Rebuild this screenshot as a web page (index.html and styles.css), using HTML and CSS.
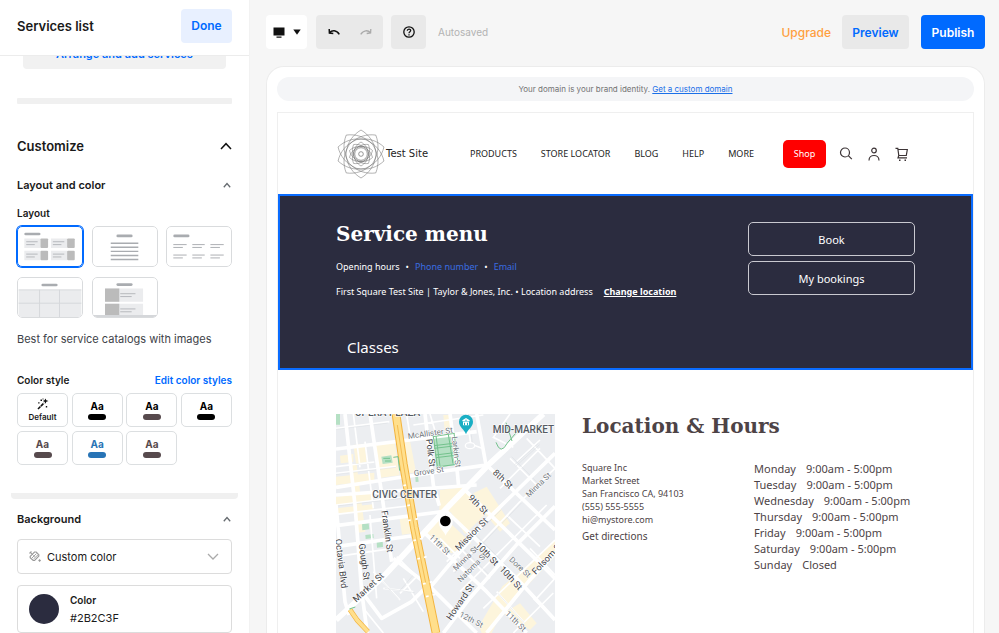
FILE: index.html
```html
<!DOCTYPE html>
<html lang="en">
<head>
<meta charset="utf-8">
<meta name="viewport" content="width=device-width, initial-scale=1">
<title>Services list</title>
<link rel="stylesheet" href="styles.css">
</head>
<body>
<div class="app">
  <aside class="sidebar">
    <header class="side-head">
      <h1>Services list</h1>
      <button class="btn btn-done" type="button">Done</button>
    </header>
    <div class="side-scroll">
      <div class="side-body">
        <button class="arrange" type="button">Arrange and add services</button>
        <div class="divider"></div>
        <div class="row customize">
          <h2>Customize</h2>
          <svg class="chev-lg" viewBox="0 0 12 8"><path d="M1 7 6 1.7 11 7" fill="none" stroke="#111" stroke-width="1.5"/></svg>
        </div>
        <div class="row">
          <h3>Layout and color</h3>
          <svg class="chev-sm" viewBox="0 0 8 6"><path d="M.8 5.2 4 1.6l3.200 3.600" fill="none" stroke="#666b70" stroke-width="1.300"/></svg>
        </div>
        <h4 class="label-layout">Layout</h4>
        <div class="layouts">
          <button class="layout is-selected" type="button" aria-label="Cards"><svg viewBox="0 0 66 41">
            <rect x="6" y="6" width="17" height="2.800" rx="1.400" fill="#a9acb0"/>
            <g fill="#ebecee"><path d="M6 12h17v10H6zM34 12h17v10H34zM6 25h17v10H6zM34 25h17v10H34z"/></g>
            <g fill="#bbb"><rect x="23" y="12" width="8" height="10" rx="1"/><rect x="51" y="12" width="8" height="10" rx="1"/><rect x="23" y="25" width="8" height="10" rx="1"/><rect x="51" y="25" width="8" height="10" rx="1"/></g>
            <path d="M8 15.500h12M8 18.500h9M36 15.500h12M36 18.500h9M8 28.500h12M8 31.500h9M36 28.500h12M36 31.500h9" stroke="#b4b6ba"/></svg></button>
          <button class="layout" type="button" aria-label="List"><svg viewBox="0 0 66 41">
            <rect x="24" y="8" width="17" height="2.800" rx="1.400" fill="#a9acb0"/>
            <path d="M18 17h29M18 21.300h29M18 25.600h29M18 29.900h29M18 34.200h29" stroke="#a9acb0" stroke-width="1.500"/></svg></button>
          <button class="layout" type="button" aria-label="Columns"><svg viewBox="0 0 66 41">
            <rect x="6" y="8" width="17" height="2.800" rx="1.400" fill="#a9acb0"/>
            <path d="M6 18.500h14M6 21.500h10M26 18.500h13M26 21.500h10M45 18.500h14M45 21.500h10M6 29.500h14M6 32.500h10M26 29.500h13M26 32.500h10M45 29.500h14M45 32.500h10" stroke="#a9acb0"/></svg></button>
          <button class="layout" type="button" aria-label="Grid"><svg viewBox="0 0 66 41">
            <path d="M0 12.500h66V41H0z" fill="#ebecee"/>
            <rect x="24" y="6" width="17" height="2.800" rx="1.400" fill="#a9acb0"/>
            <path d="M0 12.500h66M0 26.500h66M22 12.500V41M43 12.500V41" stroke="#d5d7da"/></svg></button>
          <button class="layout" type="button" aria-label="Stacked"><svg viewBox="0 0 66 41">
            <rect x="24" y="5.500" width="17" height="2.800" rx="1.400" fill="#a9acb0"/>
            <path d="M12 11h40v14H12zM12 27h40v12H12z" fill="#ebecee"/>
            <path d="M12 11h15v14H12zM12 27h15v12H12z" fill="#bbb"/>
            <path d="M28 16.500h16M28 19.500h12M28 32.500h16M28 35.500h12" stroke="#b4b6ba"/>
            <path d="M0 40h66" stroke="#d5d7da" stroke-width="2"/></svg></button>
        </div>
        <p class="hint">Best for service catalogs with images</p>
        <div class="row row-style">
          <h4>Color style</h4>
          <a class="edit" href="#">Edit color styles</a>
        </div>
        <div class="styles">
          <button class="style style-default" type="button"><svg viewBox="0 0 12 12"><path d="M1 11 7 5" stroke="#111" stroke-width="1.600" stroke-dasharray="3.500 .6"/><path d="M8.500.5 9.300 2.200 11.500 3 9.300 3.800 8.500 5.800 7.500 3.800 5.800 3l1.700-.8z" fill="#111"/><path d="M3.500 1.500h1.500v1.500H3.500zM1.200 4.200h1.300v1.300H1.200zM5.500.4h1v1h-1zM8.800 8h1.400v1.400H8.800z" fill="#111"/></svg><span>Default</span></button>
          <button class="style tone-black" type="button">Aa<i></i></button>
          <button class="style tone-mixed" type="button">Aa<i></i></button>
          <button class="style tone-black" type="button">Aa<i></i></button>
          <button class="style tone-brown" type="button">Aa<i></i></button>
          <button class="style tone-blue" type="button">Aa<i></i></button>
          <button class="style tone-brown" type="button">Aa<i></i></button>
        </div>
        <div class="divider divider-wide"></div>
        <div class="row row-bg">
          <h3><label for="bg">Background</label></h3>
          <svg class="chev-sm" viewBox="0 0 8 6"><path d="M.8 5.200 4 1.600l3.200 3.600" fill="none" stroke="#666b70" stroke-width="1.300"/></svg>
        </div>
        <div class="select-box">
          <svg class="bucket" viewBox="0 0 12 12" fill="none" stroke="#9a9a9a"><path d="M1.200 5.300 5.500 1h1.700l2.600 2.700v1.400L5.600 9.500H4.200L1.200 6.700z" stroke-width="1.200"/><path d="m3 7 4.500-4.500M4.500 8 9 3.800M1 1l3.500 3.500M1 3V1h2M6 5l-2 .3" stroke-width=".9"/><circle cx="10.600" cy="9.500" r=".8" fill="#9a9a9a"/></svg>
          <select id="bg"><option>Custom color</option></select>
          <svg class="arrow" viewBox="0 0 12 7"><path d="M1 1l5 5 5-5" fill="none" stroke="#aaa" stroke-width="1.300"/></svg>
        </div>
        <button class="color-card" type="button">
          <span class="swatch"></span>
          <span class="color-text"><b>Color</b><span>#2B2C3F</span></span>
        </button>
      </div>
    </div>
  </aside>

  <main class="main">
    <div class="toolbar">
      <button class="tool tool-device" type="button" aria-label="Device">
        <svg class="i-screen" viewBox="0 0 12 11"><path d="M.5.500h11v8H.5zM3.500 9.600h5v1.200h-5z" fill="#111"/></svg>
        <svg class="i-tri" viewBox="0 0 8 6"><path d="M.3.500h7.400L4 5.700z" fill="#111"/></svg>
      </button>
      <div class="tool tool-history">
        <button type="button" aria-label="Undo"><svg viewBox="0 0 12 8"><path d="M1.500 4.600C4 2 8.500 1.800 11.300 6.400M1.200 1l.2 4 3.900.5" fill="none" stroke="#111" stroke-width="1.500"/></svg></button>
        <button type="button" aria-label="Redo"><svg viewBox="0 0 12 8"><path d="M10.500 4.600C8 2 3.500 1.800.7 6.400M10.800 1l-.2 4-3.900.5" fill="none" stroke="#aaa" stroke-width="1.300"/></svg></button>
      </div>
      <button class="tool tool-help" type="button" aria-label="Help"><svg viewBox="0 0 12 12"><circle cx="6" cy="6" r="5.200" fill="none" stroke="#111" stroke-width="1.300"/><path d="M4.300 4.800C4.300 2.500 7.700 2.500 7.700 4.600 7.700 5.800 6 5.800 6 7.300M6 8.200v1.300" fill="none" stroke="#111" stroke-width="1.300"/></svg></button>
      <span class="saved">Autosaved</span>
      <a class="upgrade" href="#">Upgrade</a>
      <button class="btn btn-preview" type="button">Preview</button>
      <button class="btn btn-publish" type="button">Publish</button>
    </div>

    <div class="canvas">
      <div class="banner">Your domain is your brand identity.&nbsp;<a href="#">Get a custom domain</a></div>
      <div class="site">
        <header class="site-head">
          <svg class="lotus" viewBox="-75 -75 150 150" fill="none" stroke="#666" stroke-width="2">
            <defs>
              <path id="petal" d="M0-72C24-58 42-34 45 0 42 34 24 58 0 72-24 58-42 34-45 0-42-34-24-58 0-72z" vector-effect="non-scaling-stroke"/>
              <g id="ring"><use href="#petal"/><use href="#petal" transform="rotate(38)"/><use href="#petal" transform="rotate(73)"/><use href="#petal" transform="rotate(107)"/><use href="#petal" transform="rotate(142)"/></g>
            </defs>
            <g stroke-width=".5"><use href="#ring"/><use href="#ring" transform="scale(.5)"/></g>
            <circle r="19"/><circle r="7"/>
          </svg>
          <span class="site-name">Test Site</span>
          <nav class="nav">
            <a href="#">PRODUCTS</a><a href="#">STORE LOCATOR</a><a href="#">BLOG</a><a href="#">HELP</a><a href="#">MORE</a>
          </nav>
          <button class="shop" type="button">Shop</button>
          <div class="icons">
            <button type="button" aria-label="Search"><svg viewBox="0 0 14 14"><circle cx="6" cy="5.500" r="4.500"/><path d="m9.300 8.700 3.500 3.500"/></svg></button>
            <button type="button" aria-label="Account"><svg viewBox="0 0 14 14"><circle cx="7" cy="3.500" r="2.300"/><path d="M2 13.500C2 6.800 12 6.800 12 13.500"/></svg></button>
            <button type="button" aria-label="Cart"><svg viewBox="0 0 14 14"><path d="M.5 1.300h2.300l1 7.200h7.500l1-6H3M3.800 8.500 3 10.800h9"/><path d="M4 13.200h1.500M9.500 13.200H11" stroke-width="1.600"/></svg></button>
          </div>
        </header>

        <section class="hero">
          <div class="hero-top">
            <div class="hero-info">
              <h2>Service menu</h2>
              <p class="contact"><span>Opening hours</span><span>•</span><a href="#">Phone number</a><span>•</span><a href="#">Email</a></p>
              <p class="place"><span>First Square Test Site | Taylor &amp; Jones, Inc. • Location address</span><a href="#">Change location</a></p>
            </div>
            <div class="hero-actions">
              <button type="button">Book</button>
              <button type="button">My bookings</button>
            </div>
          </div>
          <h3>Classes</h3>
        </section>

        <section class="location">
          <svg class="map" viewBox="18 27 657 657" role="img" aria-label="Map">
            <rect x="18" y="27" width="657" height="657" fill="#eceef1"/>
            <g fill="#fdf5dc">
              <path d="M18 215l115-12v24L18 240zM18 275l110-12v24L18 300zM18 310l112-12v16L18 328zM70 120l35-4 5 55-32 5zM30 152l40-5v24l-38 4zM136 116l58-5 15 100-62 8zM210 110l30-3 18 95-26 4zM330 255l70-8 18 22-60 55-30-8zM280 375l52-48 92 88-60 30zM355 310l58-52 62 60-70 70zM430 265l40-20 70 110-30 25-50-60zM455 684l-8-20 70-120 60-50 55-50 43-40v50l-160 170-30 60zM520 625l50-30 50 60-20 20zM340 30h20l4 42-20 2zM208 335l30-3 14 52-36 5zM80 180l26 200-22 3-18-205z"/>
            </g>
            <g fill="#b5e0c4"><path d="M18 27h12v32H18zM96 358l20-3 2 18-21 3zM106 390l24-3 1 12-24 3zM140 410l18-2 1 18-18 2zM308 92l66-8 6 95-60 10zM154 155l30-4 4 22-30 4zM256 216l8-2 2 16-9 1z"/></g>
            <g fill="none" stroke="#fff" stroke-width="5">
              <path d="M18 70l160-20M18 185l115-14M70 27l20 160M105 110l25 200M18 205l180-21M18 300l212-25M18 328l215-25M18 455l150-22M120 330l20 250M230 30l10 60M410 27l12 90 40 15M300 27l18 60M250 60l210-30M540 27l-50 70 60 30M560 170l70-65M540 160l90 90M590 100l85 90M510 250l120-120M560 300l115-110M530 330l100 95M390 430l90 90M420 380l110 115M330 400l60 60M350 470l160-160M370 500l200-210M390 560l260-260M460 610l215-205M500 560l80 90M600 430l75 80M560 520l110 120M200 455l60 60-50 50M130 500l80 85M100 610l60 74M220 520l60 100M250 560l-90-10M620 580l55-60M550 684l120-120M610 580l60 60"/>
            </g>
            <g fill="none" stroke="#d9dce1" stroke-width="1.500">
              <path d="M553 180l72-65M557 184l72-65M200 460l50 50-40 46M137 508l70 76M395 426l88 89M425 376l110 112M354 474l160-160M374 504l200-210M18 73l155-19M18 208l180-21M18 303l212-25M415 27l12 86M504 565l78 88M545 155l90 91M164 550l90 13"/>
            </g>
            <g fill="none" stroke="#fff" stroke-width="11" stroke-linejoin="round">
              <path d="M45 27l30 273 20 260 17 124M18 300l27 290 12 40M120 27l33 225 32 218M285 27l25 213 18 62M360 27l20 153 6 66M440 27l28 153M18 132l422-52M18 247l180-28 280-40M18 270l422-30M18 362l332-44M18 425l225-32"/>
              <path d="M470 180l205 195M400 250l240 235 35 35M345 315l215 205 115 125M285 385l185 175 120 124M190 460l110 85 140 139M290 560l180-215L675 145M340 684l80-105 140-160 115-115M470 684l130-160 75-80M95 560l60 80 90-50 40-40"/>
            </g>
            <path d="M18 645l142-130 185-200 135-140L640 27" fill="none" stroke="#fff" stroke-width="17"/>
            <ellipse cx="420" cy="122" rx="14" ry="9" fill="#eceef1" stroke="#fff" stroke-width="4"/>
            <path d="M198 27l22 150 33 190 65 317" fill="none" stroke="#f3b43f" stroke-width="26"/>
            <path d="M198 27l22 150 33 190 65 317" fill="none" stroke="#ffdf8c" stroke-width="20"/>
            <path d="M202 60l18 117 33 190 34 166" fill="none" stroke="#f5bd52" stroke-width="3"/>
            <path d="M60 614l22 32 32 34" fill="none" stroke="#f3b43f" stroke-width="15"/>
            <path d="M60 614l22 32 32 34" fill="none" stroke="#ffdf8c" stroke-width="11"/>
            <path d="M242 345l-8 2M264 341l-8 2M258 405l-8 2M278 400l-8 2M270 460l-8 2M290 455l-8 2M287 535l-8 2M307 530l-8 2M296 573l-8 2M316 568l-8 2M240 300l-8 2M228 240l-8 2" stroke="#fff" stroke-width="5"/>
            <g fill="none" stroke="#73c28c" stroke-width="3"><path d="M308 95l65-10M312 122l66-8M313 130l66-8M316 150l66-8M318 158l66-8M320 186l60-8M318 92l12 92M355 88l14 88M310 95l12 90M372 84l12 92M190 157l14-2 5 42M498 112q14 40 34 2l30-35M528 53l18 55M160 160h20M165 168h18M58 612l18-6"/></g>
            <path d="M408 88c-5-16-21-21-21-38a21 21 0 0 1 42 0c0 17-16 22-21 38z" fill="#19afc4"/>
            <path d="M397 46l11-7 11 7v3h-22zM399 50h18v11h-18z" fill="#fff"/><path d="M402 53h3v8h-3zM411 53h3v8h-3zM406 44h4v3h-4z" fill="#19afc4"/>
            <path d="M347 392c-4-14-21-21-21-43a21 21 0 0 1 42 0c0 22-17 29-21 43z" fill="#fff"/>
            <circle cx="346" cy="348" r="16"/>
            <g class="map-area"><text x="74" y="34">OPERA PLAZA</text><text x="127" y="280">CIVIC CENTER</text><text x="488" y="85">MID-MARKET</text></g>
            <g class="map-road">
              <text transform="translate(288 103) rotate(83)">Polk St</text>
              <text transform="translate(154 318) rotate(82)">Franklin St</text>
              <text transform="translate(86 417) rotate(82)">Gough St</text>
              <text transform="translate(16 403) rotate(83)">Octavia Blvd</text>
              <text transform="translate(79 593) rotate(-43)">Market St</text>
              <text transform="translate(487 205) rotate(43)">8th St</text>
              <text transform="translate(413 280) rotate(45)">9th St</text>
              <text transform="translate(386 439) rotate(-45)">Mission St</text>
              <text transform="translate(435 422) rotate(46)">10th St</text>
              <text transform="translate(507 494) rotate(47)">10th St</text>
              <text transform="translate(617 510) rotate(-47)">Folsom St</text>
              <text transform="translate(363 647) rotate(-56)">Howard St</text>
            </g>
            <g class="map-minor">
              <text transform="translate(235 102) rotate(-8)">McAllister St</text>
              <text transform="translate(365 95) rotate(83)">Larkin St</text>
              <text transform="translate(253 213) rotate(-8)">Grove St</text>
              <text transform="translate(597 278) rotate(-44)">Minna St</text>
              <text transform="translate(296 398) rotate(44)">11th St</text>
              <text transform="translate(379 499) rotate(-45)">Minna St</text>
              <text transform="translate(392 533) rotate(-45)">Natoma St</text>
              <text transform="translate(536 466) rotate(43)">Dore St</text>
              <text transform="translate(386 634) rotate(27)">12th St</text>
              <text transform="translate(524 628) rotate(44)">11th St</text>
            </g>
          </svg>
          <div class="details">
            <h2>Location &amp; Hours</h2>
            <div class="columns">
              <address>
                <span>Square Inc</span><span>Market Street</span><span>San Francisco CA, 94103</span><span>(555) 555-5555</span><span>hi@mystore.com</span>
                <a href="#">Get directions</a>
              </address>
              <ul class="hours">
                <li><span>Monday</span><span>9:00am - 5:00pm</span></li>
                <li><span>Tuesday</span><span>9:00am - 5:00pm</span></li>
                <li><span>Wednesday</span><span>9:00am - 5:00pm</span></li>
                <li><span>Thursday</span><span>9:00am - 5:00pm</span></li>
                <li><span>Friday</span><span>9:00am - 5:00pm</span></li>
                <li><span>Saturday</span><span>9:00am - 5:00pm</span></li>
                <li><span>Sunday</span><span>Closed</span></li>
              </ul>
            </div>
          </div>
        </section>
      </div>
    </div>
  </main>
</div>
</body>
</html>
```
FILE: styles.css
```css
* { box-sizing: border-box; }
body { margin: 0; font-family: Inter, "Liberation Sans", sans-serif; font-size: 11px; color: #1a1a1a; background: #f6f6f6; }
h1, h2, h3, h4, p, ul { margin: 0; padding: 0; }
button { font: inherit; color: inherit; background: none; border: 0; padding: 0; cursor: pointer; }
svg { display: block; flex: none; }
a { text-decoration: none; }

.app { display: grid; grid-template-columns: 250px minmax(0, 1fr); height: 100vh; overflow: hidden; }

/* Sidebar */
.sidebar { display: flex; flex-direction: column; min-height: 0; background: #fff; border-right: 1px solid #f2f2f2; }
.side-head { display: flex; align-items: center; justify-content: space-between; height: 56px; flex: none; padding: 0 17px 4px; border-bottom: 1px solid #ececec; }
.side-head h1 { font-size: 13px; font-weight: 600; }
.btn { height: 34px; border-radius: 4px; font-size: 12px; font-weight: 600; }
.btn-done { width: 51px; background: #e8f0ff; color: #006aff; }
.side-scroll { flex: 1; min-height: 0; overflow: hidden; }
.side-body { display: flex; flex-direction: column; margin-top: -21px; padding: 0 17px; }
.arrange { height: 34px; margin: 0 6px; padding-top: 4px; border-radius: 4px; background: #f1f1f1; color: #006aff; font-size: 11px; font-weight: 600; }
.divider { height: 6px; margin-top: 29px; border-radius: 1px; background: #f0f0f0; }
.row { display: flex; align-items: center; justify-content: space-between; height: 20px; }
.customize { margin: 32px 0 19px; }
.customize h2 { font-size: 13px; font-weight: 600; }
.row h3 { font-size: 11px; font-weight: 600; }
h4 { font-size: 10px; font-weight: 600; }
.chev-lg { width: 12px; height: 8px; }
.chev-sm { width: 8px; height: 6px; margin-right: 1px; }
.label-layout { margin-top: 10px; line-height: 16px; }
.layouts { display: grid; grid-template-columns: repeat(3, 66px); justify-content: space-between; gap: 10px 0; margin-top: 5px; }
.layout { height: 41px; border-radius: 5px; overflow: hidden; }
.layout svg { width: 100%; height: 41px; border: 1px solid #d9dbdd; border-radius: 5px; }
.layout.is-selected { overflow: visible; box-shadow: 0 0 0 1px #006aff; }
.layout.is-selected svg { border-color: #006aff; }
.hint { margin-top: 12px; font-size: 11px; line-height: 18px; color: #3d4248; }
.row-style { margin-top: 22px; }
.edit { font-size: 10px; font-weight: 600; color: #006aff; }
.styles { display: grid; grid-template-columns: repeat(4, 51px); justify-content: space-between; gap: 4px 0; margin-top: 3px; }
.style { display: flex; flex-direction: column; align-items: center; justify-content: center; gap: 2px; height: 34px; border: 1px solid #dcdfe1; border-radius: 5px; font-size: 10px; line-height: 12px; font-weight: 700; }
.style i { width: 18px; height: 6px; border-radius: 3px; background: currentColor; }
.style-default { gap: 1px; font-size: 8px; font-weight: 600; }
.style-default svg { width: 12px; height: 12px; }
.tone-black, .tone-mixed { color: #000; }
.tone-mixed i { background: #574a4d; }
.tone-brown { color: #574a4d; }
.tone-blue { color: #2874b6; }
.divider-wide { margin: 28px -6px 0; border-radius: 0 0 4px 4px; }
.row-bg { margin-top: 10px; }
.select-box { display: grid; grid-template-columns: 30px 1fr 24px; align-items: center; height: 35px; margin-top: 10px; border: 1px solid #dcdcdc; border-radius: 4px; }
.select-box > * { grid-row: 1; }
.select-box select { grid-column: 1 / -1; height: 33px; padding: 0 29px; border: 0; border-radius: 4px; appearance: none; background: none; font: inherit; font-size: 11px; color: #1a1a1a; }
.bucket { grid-column: 1; width: 12px; height: 12px; justify-self: center; margin-right: -4px; }
.arrow { grid-column: 3; width: 12px; height: 7px; }
.color-card { display: flex; align-items: center; gap: 11px; height: 48px; margin-top: 11px; padding: 0 11px; border: 1px solid #dcdcdc; border-radius: 4px; text-align: left; }
.swatch { width: 30px; height: 30px; border-radius: 50%; background: #2b2c3f; }
.color-text { display: flex; flex-direction: column; gap: 2px; font-size: 11px; line-height: 16px; }
.color-text b { font-size: 10px; font-weight: 600; }

/* Toolbar */
.main { display: flex; flex-direction: column; min-width: 0; min-height: 0; padding: 0 14px 0 16px; }
.toolbar { display: flex; align-items: center; height: 66px; flex: none; padding-bottom: 2px; }
.tool { height: 34px; border-radius: 4px; background: #e9e9e9; display: flex; align-items: center; justify-content: center; }
.tool-device { width: 41px; gap: 8px; background: #fff; }
.i-screen { width: 12px; height: 11px; }
.i-tri { width: 8px; height: 6px; }
.tool-history { width: 67px; margin: 0 8px 0 9px; gap: 20px; }
.tool-history svg { width: 12px; height: 8px; }
.tool-help { width: 35px; }
.tool-help svg { width: 12px; height: 12px; }
.saved { margin-left: 12px; color: #b3b3b3; font-size: 10px; }
.upgrade { margin: 0 11px 0 auto; color: #ff9f40; font-size: 12px; font-weight: 500; }
.btn-preview { width: 67px; margin-right: 12px; background: #e9e9e9; color: #006aff; }
.btn-publish { width: 64px; background: #006aff; color: #fff; }

/* Site preview */
.canvas { flex: 1; min-height: 0; display: flex; flex-direction: column; padding: 10px 10px 0; background: #fff; border: 1px solid #ececec; border-bottom: 0; border-radius: 18px 18px 0 0; overflow: hidden; }
.banner { display: flex; align-items: center; justify-content: center; height: 24px; flex: none; border-radius: 12px; background: #f4f5f7; color: #737373; font-size: 8px; }
.banner a { color: #1a6fe8; text-decoration: underline; }
.site { flex: 1; min-height: 0; margin-top: 11px; border: 1px solid #efefef; border-bottom: 0; font-family: "Noto Sans", "Open Sans", sans-serif; overflow: hidden; }
.site-head { display: flex; align-items: center; height: 81px; padding: 0 64px 0 58px; }
.lotus { width: 50px; height: 50px; }
.site-name { font-family: "DejaVu Sans", sans-serif; font-size: 10px; color: #222; }
.nav { display: flex; gap: 24px; margin-left: auto; color: #222; font-size: 9px; }
.nav a { color: inherit; }
.shop { width: 43px; height: 28px; margin: 0 13px 0 29px; border-radius: 5px; background: #f00; color: #fff; font-size: 9px; }
.icons { display: flex; gap: 14px; }
.icons svg { width: 14px; height: 14px; fill: none; stroke: #3c3436; stroke-width: 1.200; }

.hero { height: 176px; padding: 26px 56px 0; border: 2px solid #0a6cff; background: #2b2c3f; color: #fff; }
.hero-top { display: flex; justify-content: space-between; height: 111px; }
.hero h2, .details h2 { font-family: "DejaVu Serif", serif; font-weight: 700; }
.hero h2 { font-size: 20px; line-height: 24px; }
.hero p { display: flex; font-size: 9px; line-height: 15px; }
.contact { gap: 6px; margin-top: 13px; }
.contact a { color: #3a6de0; }
.place { gap: 11px; margin-top: 10px; }
.place a { color: #fff; font-weight: 700; text-decoration: underline; }
.hero-actions { display: flex; flex-direction: column; gap: 5px; width: 167px; }
.hero-actions button { height: 34px; border: 1px solid #c9c9d0; border-radius: 5px; font-size: 11px; }
.hero h3 { padding-left: 11px; font-size: 15px; line-height: 28px; font-weight: 400; }

.location { display: grid; grid-template-columns: 219px 1fr; gap: 27px; padding: 44px 58px 0; color: #4d4346; }
.map { width: 219px; height: 219px; }
.map text { font-family: Roboto, sans-serif; paint-order: stroke; stroke: #fff; stroke-width: 3px; stroke-linejoin: round; }
.map-area text { font-size: 30px; font-weight: 500; fill: #555b63; }
.map-road text { font-size: 27px; fill: #3f4347; }
.map-minor text { font-size: 24px; fill: #6f757b; }
.details h2 { font-size: 20px; line-height: 24px; }
.columns { display: grid; grid-template-columns: 172px 1fr; margin-top: 23px; }
address { display: flex; flex-direction: column; font-style: normal; font-size: 9px; line-height: 13px; }
address a { margin-top: 4px; color: inherit; font-size: 10px; }
.hours { list-style: none; font-size: 11px; line-height: 16px; }
.hours li { display: flex; gap: 10px; }
```
